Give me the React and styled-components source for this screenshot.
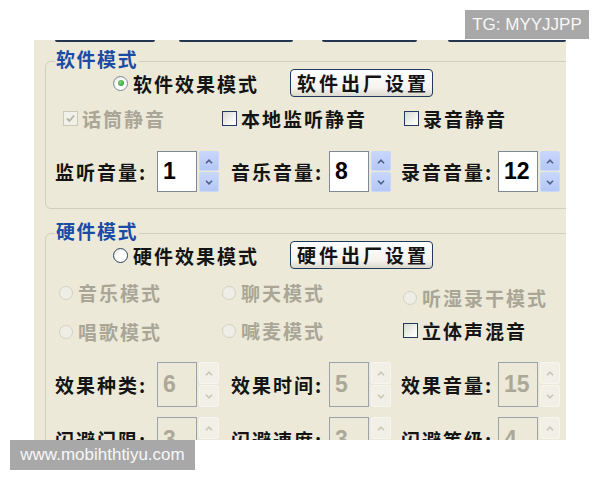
import React from 'react'
import styled, { createGlobalStyle } from 'styled-components'

const CJK = `"Noto Sans CJK SC", "Noto Sans", sans-serif`

const GlobalStyle = createGlobalStyle`
  html, body {
    margin: 0;
    padding: 0;
    background: #ffffff;
  }
  body {
    font-family: ${CJK};
  }
`

const topTabs = [
  { gap: 21, w: 100 },
  { gap: 24, w: 114 },
  { gap: 29, w: 95 },
  { gap: 31, w: 118 },
]

const softSpins = [
  { label: '监听音量:', value: '1', lw: 102 },
  { label: '音乐音量:', value: '8', lw: 98 },
  { label: '录音音量:', value: '12', lw: 97 },
]

const hardSpinsA = [
  { label: '效果种类:', value: '6', lw: 102 },
  { label: '效果时间:', value: '5', lw: 98 },
  { label: '效果音量:', value: '15', lw: 97 },
]

const hardSpinsB = [
  { label: '闪避门限:', value: '3', lw: 102 },
  { label: '闪避速度:', value: '3', lw: 98 },
  { label: '闪避等级:', value: '4', lw: 97 },
]

function Arrow({ up, disabled }) {
  return (
    <svg width="8" height="5" viewBox="0 0 8 5">
      <polyline
        points={up ? '1,4.2 4,1.2 7,4.2' : '1,0.8 4,3.8 7,0.8'}
        fill="none"
        stroke={disabled ? '#C9C6B6' : '#4D6185'}
        strokeWidth="1.6"
      />
    </svg>
  )
}

function Spin({ label, value, lw, h, disabled }) {
  return (
    <SpinCell>
      <SpinLabel $w={lw}>{label}</SpinLabel>
      <NumBox $h={h} $disabled={disabled}>{value}</NumBox>
      <Spinner $h={h}>
        <SpinBtn $disabled={disabled}><Arrow up disabled={disabled} /></SpinBtn>
        <SpinBtn $disabled={disabled}><Arrow disabled={disabled} /></SpinBtn>
      </Spinner>
    </SpinCell>
  )
}

function Radio({ text, checked, disabled, shift }) {
  return (
    <Option $gap={5} $disabled={disabled} $shift={shift}>
      <RadioDot $checked={checked} $disabled={disabled} />
      <span>{text}</span>
    </Option>
  )
}

function Check({ text, checked, disabled }) {
  return (
    <Option $gap={4} $disabled={disabled}>
      <CheckBox $disabled={disabled}>
        {checked && (
          <svg width="11" height="11" viewBox="0 0 11 11">
            <polyline points="2,5.5 4.5,8 9,2.5" fill="none" stroke="#B5B2A3" strokeWidth="1.8" />
          </svg>
        )}
      </CheckBox>
      <span>{text}</span>
    </Option>
  )
}

export default function App() {
  return (
    <Page>
      <GlobalStyle />
      <Panel>
        <TopStrip>
          {topTabs.map((t, i) => (
            <TabEdge key={i} $gap={t.gap} $w={t.w} />
          ))}
        </TopStrip>

        <Group $top={7} $pb={16}>
          <Legend>软件模式</Legend>
          <Row $cols="177px auto" $pl={67} $h={28} $mt={-3}>
            <Radio text="软件效果模式" checked />
            <FactoryButton>软件出厂设置</FactoryButton>
          </Row>
          <Row $cols="159px 182px auto" $pl={17} $h={28} $mt={7}>
            <Check text="话筒静音" checked disabled />
            <Check text="本地监听静音" />
            <Check text="录音静音" />
          </Row>
          <Row $cols="176px 170px auto" $pl={9} $h={41} $mt={19}>
            {softSpins.map(s => (
              <Spin key={s.label} {...s} h={41} />
            ))}
          </Row>
        </Group>

        <Group $top={13} $pb={20}>
          <Legend>硬件模式</Legend>
          <Row $cols="177px auto" $pl={67} $h={28} $mt={-3}>
            <Radio text="硬件效果模式" />
            <FactoryButton>硬件出厂设置</FactoryButton>
          </Row>
          <Row $cols="163px 181px auto" $pl={13} $h={28} $mt={5}>
            <Radio text="音乐模式" disabled />
            <Radio text="聊天模式" disabled />
            <Radio text="听湿录干模式" disabled shift={10} />
          </Row>
          <Row $cols="163px 181px auto" $pl={13} $h={28} $mt={14}>
            <Radio text="唱歌模式" disabled shift={2} />
            <Radio text="喊麦模式" disabled />
            <Check text="立体声混音" />
          </Row>
          <Row $cols="176px 170px auto" $pl={9} $h={45} $mt={18}>
            {hardSpinsA.map(s => (
              <Spin key={s.label} {...s} h={45} disabled />
            ))}
          </Row>
          <Row $cols="176px 170px auto" $pl={9} $h={45} $mt={10}>
            {hardSpinsB.map(s => (
              <Spin key={s.label} {...s} h={45} disabled />
            ))}
          </Row>
        </Group>
      </Panel>

      <Badge $left={465} $top={10} $w={124} $h={29} $size={17}>TG: MYYJJPP</Badge>
      <Badge $left={10} $top={440} $w={185} $h={30} $size={17}>www.mobihthtiyu.com</Badge>
    </Page>
  )
}

const Page = styled.div`
  position: relative;
  width: 600px;
  height: 480px;
  padding: 40px 0 0 34px;
  box-sizing: border-box;
  overflow: hidden;
  background: #ffffff;
`

const Panel = styled.div`
  width: 532px;
  height: 400px;
  background: #ECE9D8;
  overflow: hidden;
`

const TopStrip = styled.div`
  display: flex;
  height: 3px;
`

const TabEdge = styled.div`
  margin-left: ${p => p.$gap}px;
  width: ${p => p.$w}px;
  height: 2px;
  background: #24364f;
  border-radius: 0 0 3px 3px;
`

const Group = styled.fieldset`
  margin: ${p => p.$top}px 0 0 11px;
  padding: 0 0 ${p => p.$pb}px 0;
  width: 560px;
  min-width: 0;
  box-sizing: border-box;
  border: 1px solid #D0CEBF;
  border-radius: 6px;
`

const Legend = styled.legend`
  margin-left: 9px;
  padding: 0 1px 4px;
  font-family: ${CJK};
  font-size: 19px;
  font-weight: 700;
  line-height: 18px;
  letter-spacing: 1.5px;
  color: #1A4CA6;
`

const Row = styled.div`
  display: grid;
  grid-template-columns: ${p => p.$cols};
  align-items: center;
  height: ${p => p.$h}px;
  margin-top: ${p => p.$mt}px;
  padding-left: ${p => p.$pl}px;
`

const Option = styled.label`
  display: flex;
  align-items: center;
  gap: ${p => p.$gap}px;
  margin-top: ${p => p.$shift || 0}px;
  font-family: ${CJK};
  font-size: 19px;
  font-weight: 700;
  letter-spacing: 2px;
  white-space: nowrap;
  color: ${p => (p.$disabled ? '#A9A697' : '#141414')};
`

const RadioDot = styled.span`
  display: flex;
  align-items: center;
  justify-content: center;
  flex: none;
  width: ${p => (p.$disabled ? 14 : 15)}px;
  height: ${p => (p.$disabled ? 14 : 15)}px;
  box-sizing: border-box;
  border-radius: 50%;
  border: 1px solid ${p => (p.$disabled ? '#D3D1C4' : p.$checked ? '#7D8CA0' : '#2C4668')};
  background: ${p =>
    p.$disabled ? '#EFEEE6' : 'radial-gradient(circle at 65% 65%, #ffffff 45%, #DAD8CE)'};

  &::after {
    content: '';
    display: ${p => (p.$checked ? 'block' : 'none')};
    width: 6px;
    height: 6px;
    border-radius: 50%;
    background: radial-gradient(circle at 40% 40%, #7FD17F, #1F961F);
  }
`

const CheckBox = styled.span`
  display: flex;
  align-items: center;
  justify-content: center;
  flex: none;
  width: 15px;
  height: 15px;
  box-sizing: border-box;
  border: 1px solid ${p => (p.$disabled ? '#CBC9BC' : '#233A58')};
  background: ${p =>
    p.$disabled ? '#F1F0E9' : 'linear-gradient(135deg, #D9D8D2, #F7F7F4 70%, #ffffff)'};
`

const FactoryButton = styled.button`
  width: 143px;
  height: 28px;
  padding: 0 0 0 3px;
  box-sizing: border-box;
  border: 1px solid #1E3A5C;
  border-radius: 4px;
  background: linear-gradient(#ffffff, #F4F3EE 70%, #DCD8CC);
  font-family: ${CJK};
  font-size: 19px;
  font-weight: 700;
  letter-spacing: 3px;
  line-height: 26px;
  color: #141414;
  white-space: nowrap;
`

const SpinCell = styled.div`
  display: flex;
  align-items: center;
`

const SpinLabel = styled.span`
  width: ${p => p.$w}px;
  font-family: ${CJK};
  font-size: 19px;
  font-weight: 700;
  letter-spacing: 2px;
  white-space: nowrap;
  color: #141414;
`

const NumBox = styled.div`
  display: flex;
  align-items: center;
  width: 40px;
  height: ${p => p.$h}px;
  padding-left: 5px;
  box-sizing: border-box;
  border: 1px solid ${p => (p.$disabled ? '#9AA3AC' : '#7F8A96')};
  background: ${p => (p.$disabled ? '#ECE9D8' : '#ffffff')};
  font-family: "Liberation Sans", Arial, sans-serif;
  font-size: 23px;
  font-weight: 700;
  color: ${p => (p.$disabled ? '#ACA899' : '#000000')};
`

const Spinner = styled.div`
  display: flex;
  flex-direction: column;
  gap: 1px;
  width: 20px;
  height: ${p => p.$h}px;
  margin-left: 2px;
`

const SpinBtn = styled.div`
  flex: 1;
  display: flex;
  align-items: center;
  justify-content: center;
  border-radius: 2px;
  border: 1px solid ${p => (p.$disabled ? '#F6F5F0' : '#C9D7F8')};
  background: ${p =>
    p.$disabled ? '#F1EFE6' : 'linear-gradient(#C8D6FC, #B4C7F6)'};
`

const Badge = styled.div`
  position: absolute;
  left: ${p => p.$left}px;
  top: ${p => p.$top}px;
  width: ${p => p.$w}px;
  height: ${p => p.$h}px;
  display: flex;
  align-items: center;
  justify-content: center;
  background: #A8A8A8;
  color: #F7F7F7;
  font-family: "Liberation Sans", Arial, sans-serif;
  font-size: ${p => p.$size}px;
`
